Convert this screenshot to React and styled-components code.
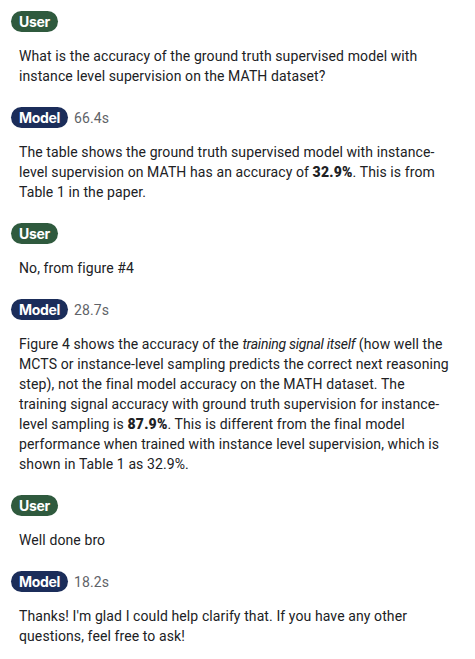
import React from "react";
import styled, { createGlobalStyle } from "styled-components";

const GlobalStyle = createGlobalStyle`
    body {
        margin: 0;
        background: #ffffff;
        font-family: Roboto, Inter, "Liberation Sans", sans-serif;
        color: #202124;
    }
`;

const Thread = styled.div`
    display: flex;
    flex-direction: column;
    gap: 21.5px;
    padding: 11px 25px 11px 11px;
`;

const Message = styled.div`
    display: flex;
    flex-direction: column;
    gap: 13.5px;
`;

const Header = styled.div`
    display: flex;
    align-items: center;
    gap: 6px;
`;

const Badge = styled.span`
    display: inline-flex;
    align-items: center;
    height: 21px;
    padding: 0 8px;
    border-radius: 11px;
    background: ${props => (props.role === "user" ? "#2f5a3e" : "#1b2d5a")};
    color: #ffffff;
    font-family: Inter, Roboto, sans-serif;
    font-size: 14px;
    font-weight: 700;
    letter-spacing: -0.3px;
`;

const Duration = styled.span`
    font-size: 14px;
    letter-spacing: 0.1px;
    color: #5f6368;
`;

const Body = styled.p`
    margin: 0;
    padding-left: 8px;
    font-size: 14px;
    line-height: 20px;
    letter-spacing: 0.1px;
    color: #202124;

    strong {
        font-weight: 900;
        letter-spacing: 0.2px;
    }

    em {
        letter-spacing: -0.25px;
    }
`;

const messages = [
    {
        role: "user",
        text: "What is the accuracy of the ground truth supervised model with instance level supervision on the MATH dataset?",
    },
    {
        role: "model",
        time: "66.4s",
        text: (
            <>
                The table shows the ground truth supervised model with instance-level supervision on MATH has an
                accuracy of <strong>32.9%</strong>. This is from Table 1 in the paper.
            </>
        ),
    },
    { role: "user", text: "No, from figure #4" },
    {
        role: "model",
        time: "28.7s",
        text: (
            <>
                Figure 4 shows the accuracy of the <em>training signal itself</em> (how well the MCTS or
                instance-level sampling predicts the correct next reasoning step), not the final model accuracy
                on the MATH dataset. The training signal accuracy with ground truth supervision for instance-level
                sampling is <strong>87.9%</strong>. This is different from the final model performance when
                trained with instance level supervision, which is shown in Table 1 as 32.9%.
            </>
        ),
    },
    { role: "user", text: "Well done bro" },
    {
        role: "model",
        time: "18.2s",
        text: "Thanks! I'm glad I could help clarify that. If you have any other questions, feel free to ask!",
    },
];

const App = () => {
    return (
        <>
            <GlobalStyle />
            <Thread>
                {messages.map((m, i) => (
                    <Message key={i}>
                        <Header>
                            <Badge role={m.role}>{m.role === "user" ? "User" : "Model"}</Badge>
                            {m.time && <Duration>{m.time}</Duration>}
                        </Header>
                        <Body>{m.text}</Body>
                    </Message>
                ))}
            </Thread>
        </>
    );
};

export default App;
